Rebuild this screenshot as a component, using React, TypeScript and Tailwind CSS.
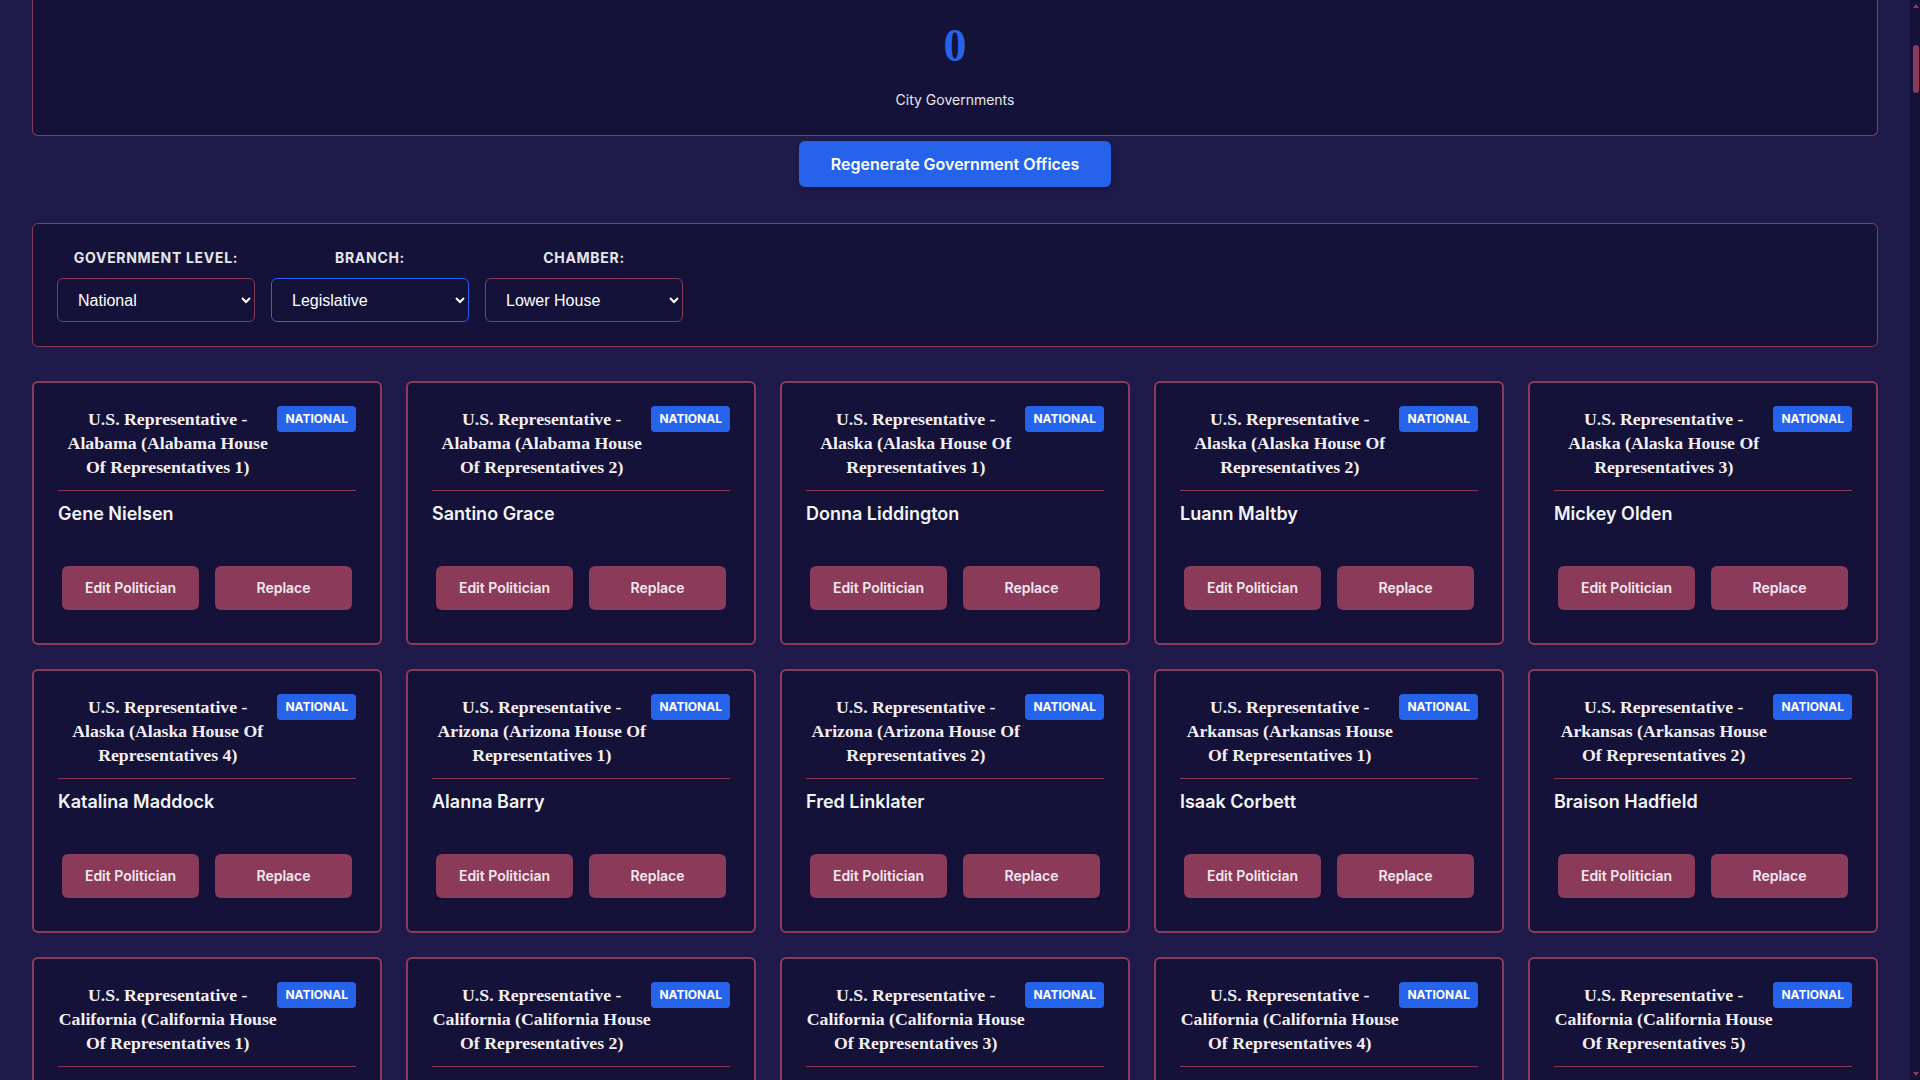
import { useMemo } from 'react';

interface Office {
  id: string;
  role: string;
  seat: string;
  holder: string;
}

// states and how many house seats each one gets in this world
const STATES: [string, number][] = [
  ['Alabama', 2], ['Alaska', 4], ['Arizona', 2], ['Arkansas', 2], ['California', 52],
  ['Colorado', 8], ['Connecticut', 5], ['Delaware', 1], ['Florida', 28], ['Georgia', 14],
  ['Hawaii', 2], ['Idaho', 2], ['Illinois', 17], ['Indiana', 9], ['Iowa', 4],
  ['Kansas', 4], ['Kentucky', 6], ['Louisiana', 6], ['Maine', 2], ['Maryland', 8],
  ['Massachusetts', 9], ['Michigan', 13], ['Minnesota', 8], ['Mississippi', 4], ['Missouri', 8],
  ['Montana', 2], ['Nebraska', 3], ['Nevada', 4], ['New Hampshire', 2], ['New Jersey', 12],
  ['New Mexico', 3], ['New York', 26], ['North Carolina', 14], ['North Dakota', 1], ['Ohio', 15],
  ['Oklahoma', 5], ['Oregon', 6], ['Pennsylvania', 17], ['Rhode Island', 2], ['South Carolina', 7],
  ['South Dakota', 1], ['Tennessee', 9], ['Texas', 38], ['Utah', 4], ['Vermont', 1],
  ['Virginia', 11], ['Washington', 10], ['West Virginia', 2], ['Wisconsin', 8], ['Wyoming', 1],
];

const SEATED = [
  'Gene Nielsen', 'Santino Grace', 'Donna Liddington', 'Luann Maltby', 'Mickey Olden',
  'Katalina Maddock', 'Alanna Barry', 'Fred Linklater', 'Isaak Corbett', 'Braison Hadfield',
];

const FIRST = ['Marla', 'Dewey', 'Colette', 'Ramon', 'Tessa', 'Hollis', 'Priya', 'Gordon', 'Yvette', 'Lonnie', 'Bethany', 'Corey', 'Ines', 'Wendell'];
const LAST = ['Pickering', 'Ashdown', 'Vance', 'Holloway', 'Brennan', 'Castellano', 'Whitlock', 'Dunmore', 'Okafor', 'Sterling', 'Marsh', 'Quinlan', 'Rutledge'];

function buildOffices(): Office[] {
  const rows: Office[] = [];
  STATES.forEach(([state, seats]) => {
    for (let n = 1; n <= seats; n++) {
      const i = rows.length;
      rows.push({
        id: `${state}-${n}`,
        role: 'U.S. Representative -',
        seat: `${state} (${state} House Of Representatives ${n})`,
        holder: SEATED[i] ?? `${FIRST[i % FIRST.length]} ${LAST[(i * 7) % LAST.length]}`,
      });
    }
  });
  return rows;
}

function OfficeCard({ office }: { office: Office }) {
  return (
    <div className="flex flex-col rounded-md border-2 border-[#8b3a5a] bg-[#141238] p-6">
      <div className="flex items-start border-b border-[#8b3a5a] pb-[11px]">
        <h3 className="min-w-0 flex-1 text-center font-['Liberation_Serif',serif] text-[17.75px] font-bold leading-6 text-[#f3eff6]">
          {office.role}
          <br />
          {office.seat}
        </h3>
        <span className="-mt-px rounded bg-[#2563eb] px-2 py-[5px] text-xs font-bold leading-4 text-white">
          NATIONAL
        </span>
      </div>
      <p className="mt-[9px] text-lg font-semibold leading-7 text-[#f3f4f6]">{office.holder}</p>
      <div className="mb-[9px] mt-[38px] flex gap-4 px-1">
        <button className="h-11 flex-1 rounded-md bg-[#8b3a5a] text-sm font-semibold text-[#f3e8ee]">
          Edit Politician
        </button>
        <button className="h-11 flex-1 rounded-md bg-[#8b3a5a] text-sm font-semibold text-[#f3e8ee]">
          Replace
        </button>
      </div>
    </div>
  );
}

function FilterSelect({ label, value, options, focused }: { label: string; value: string; options: string[]; focused?: boolean }) {
  return (
    <div className="flex flex-col items-center gap-[10px]">
      <label className="text-sm font-bold uppercase leading-5 tracking-[0.05em] text-[#e5e7eb]">{label}</label>
      <select
        defaultValue={value}
        className={`h-11 w-[198px] rounded-md border bg-[#141238] pl-4 pr-2 font-['Liberation_Sans',sans-serif] text-base text-white ${
          focused ? 'border-[#2563eb]' : 'border-[#8b3a5a]'
        }`}
      >
        {options.map((o) => (
          <option key={o}>{o}</option>
        ))}
      </select>
    </div>
  );
}

// themed page scrollbar (track + thumb + arrows)
function ScrollTrack() {
  return (
    <div className="flex h-screen w-[10px] flex-col items-center bg-[#141238] py-1">
      <svg width="6" height="4" viewBox="0 0 6 4" className="ml-px">
        <path d="M3 0L6 4H0z" fill="#8b3a5a" />
      </svg>
      <div className="ml-px mt-[37px] h-12 w-1.5 rounded-full bg-[#8b3a5a]" />
      <div className="flex-1" />
      <svg width="6" height="4" viewBox="0 0 6 4" className="ml-px">
        <path d="M0 0H6L3 4z" fill="#8b3a5a" />
      </svg>
    </div>
  );
}

export default function App() {
  const offices = useMemo(buildOffices, []);

  return (
    <div className="flex h-screen bg-[#1e1b4b] font-['Inter',sans-serif]">
      <div className="h-screen flex-1 overflow-y-scroll [scrollbar-width:none]">
        <div className="px-8 pb-8">
          <div className="rounded-b-md border-x border-b border-[#8b3a5a] bg-[#141238] pb-[25px] pt-6 text-center">
            <div className="font-['Liberation_Serif',serif] text-[46px] font-bold leading-[44px] text-[#2563eb]">0</div>
            <div className="mt-[22px] text-sm leading-5 text-[#e5e7eb]">City Governments</div>
          </div>

          <button className="mx-auto mt-[5px] block h-[46px] rounded-md bg-[#2563eb] px-8 text-base font-semibold text-white shadow-md">
            Regenerate Government Offices
          </button>

          <div className="mt-9 flex gap-4 rounded-md border border-[#8b3a5a] bg-[#141238] p-6">
            <FilterSelect label="Government Level:" value="National" options={['National', 'State', 'County', 'City']} />
            <FilterSelect label="Branch:" value="Legislative" options={['Legislative', 'Executive', 'Judicial']} focused />
            <FilterSelect label="Chamber:" value="Lower House" options={['Lower House', 'Upper House']} />
          </div>

          <div className="mt-[34px] grid grid-cols-5 gap-6">
            {offices.map((o) => (
              <OfficeCard key={o.id} office={o} />
            ))}
          </div>
        </div>
      </div>
      <ScrollTrack />
    </div>
  );
}
